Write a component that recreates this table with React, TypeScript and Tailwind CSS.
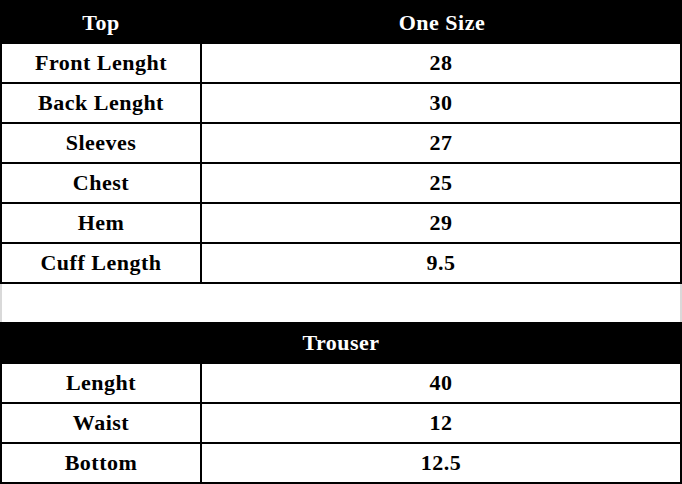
const top = [
  ['Front Lenght', '28'],
  ['Back Lenght', '30'],
  ['Sleeves', '27'],
  ['Chest', '25'],
  ['Hem', '29'],
  ['Cuff Length', '9.5'],
];

const trouser = [
  ['Lenght', '40'],
  ['Waist', '12'],
  ['Bottom', '12.5'],
];

function Row({ label, value }: { label: string; value: string }) {
  return (
    <div className="flex h-[40px] border-x-2 border-b-2 border-black bg-white text-black">
      <div className="w-[200px] border-r-2 border-black flex items-center justify-center">{label}</div>
      <div className="flex-1 flex items-center justify-center">{value}</div>
    </div>
  );
}

export default function App() {
  return (
    <div
      className="w-[682px] h-[484px] bg-white font-bold text-[22px] tracking-[0.5px] leading-none overflow-hidden"
      style={{ fontFamily: '"Liberation Serif", "Times New Roman", serif' }}
    >
      <div className="flex h-[44px] bg-black text-white">
        <div className="w-[202px] flex items-center justify-center pt-[1px]">Top</div>
        <div className="flex-1 flex items-center justify-center pt-[1px]">One Size</div>
      </div>
      {top.map(([l, v]) => (
        <Row key={l} label={l} value={v} />
      ))}

      <div className="h-[38px] border-x-2 border-[#d9d9d9] bg-white" />

      <div className="flex h-[42px] bg-black text-white items-center justify-center">Trouser</div>
      {trouser.map(([l, v]) => (
        <Row key={l} label={l} value={v} />
      ))}
    </div>
  );
}
